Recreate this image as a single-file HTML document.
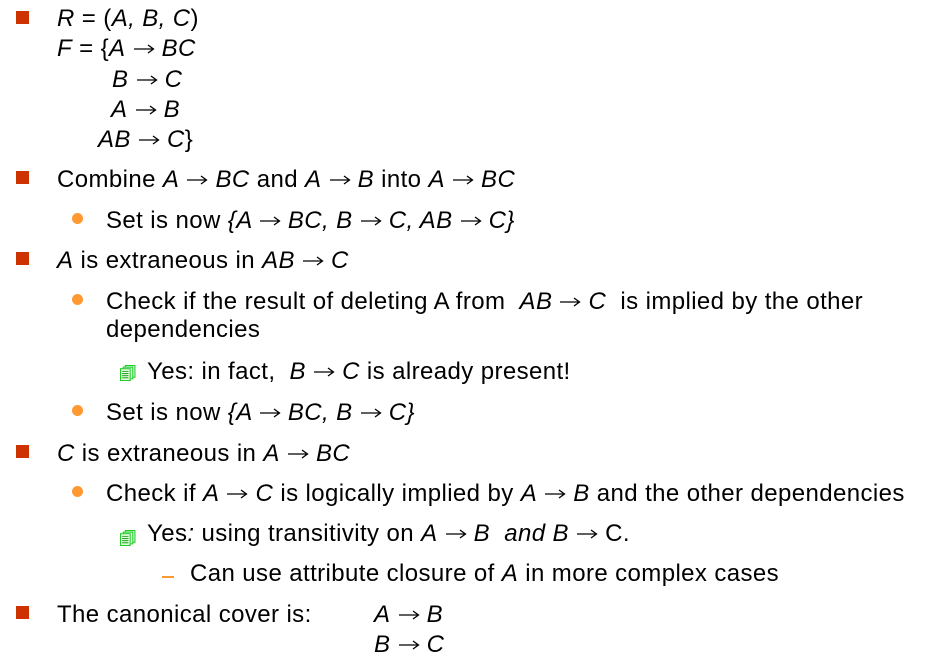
<!DOCTYPE html>
<html><head><meta charset="utf-8"><style>
body{margin:0;background:#fff;width:926px;height:669px;position:relative;overflow:hidden;font-family:"Liberation Sans",Arial,sans-serif;font-size:24px;letter-spacing:0.4px;color:#000}
.l{position:absolute;line-height:26px;white-space:pre;margin-top:2px}
i{font-style:italic}
.a{display:inline-block;width:22px;height:12px;vertical-align:1px}
.sq{position:absolute;left:16px;width:13px;height:13px;background:#cc3300}
.ci{position:absolute;left:72px;width:11px;height:11px;border-radius:50%;background:#ff9933}
.ic{position:absolute;left:120px;width:16px;height:16px}
.da{position:absolute;left:162px;width:12px;height:2px;background:#ff9933}
</style></head><body>
<svg width="0" height="0" style="position:absolute"><defs><symbol id="ar" viewBox="0 0 22 12"><path d="M1 6H20M15 2L20.5 6L15 10" fill="none" stroke="#000" stroke-width="1.3"/></symbol></defs></svg>
<div class="sq" style="top:11px"></div>
<div class="l" style="left:57px;top:4px"><i>R</i> = (<i>A, B, C</i>)</div>
<div class="l" style="left:57px;top:34px"><i>F</i> = {<i>A</i> <svg class="a"><use href="#ar"/></svg> <i>BC</i></div>
<div class="l" style="left:112px;top:65px"><i>B</i> <svg class="a"><use href="#ar"/></svg> <i>C</i></div>
<div class="l" style="left:111px;top:95px"><i>A</i> <svg class="a"><use href="#ar"/></svg> <i>B</i></div>
<div class="l" style="left:98px;top:125px"><i>AB</i> <svg class="a"><use href="#ar"/></svg> <i>C</i>}</div>

<div class="sq" style="top:171px"></div>
<div class="l" style="left:57px;top:165px">Combine <i>A</i> <svg class="a"><use href="#ar"/></svg> <i>BC</i> and <i>A</i> <svg class="a"><use href="#ar"/></svg> <i>B</i> into <i>A</i> <svg class="a"><use href="#ar"/></svg> <i>BC</i></div>
<div class="ci" style="top:213px"></div>
<div class="l" style="left:106px;top:206px">Set is now <i>{A <svg class="a"><use href="#ar"/></svg> BC, B <svg class="a"><use href="#ar"/></svg> C, AB <svg class="a"><use href="#ar"/></svg> C}</i></div>

<div class="sq" style="top:252px"></div>
<div class="l" style="left:57px;top:246px"><i>A</i> is extraneous in <i>AB</i> <svg class="a"><use href="#ar"/></svg> <i>C</i></div>
<div class="ci" style="top:294px"></div>
<div class="l" style="left:106px;top:287px">Check if the result of deleting A from  <i>AB</i> <svg class="a"><use href="#ar"/></svg> <i>C</i>  is implied by the other</div>
<div class="l" style="left:106px;top:315px">dependencies</div>
<svg class="ic" style="top:365px" viewBox="0 0 15 15"><rect x="5" y="0.5" width="9" height="11" fill="#dfe" stroke="#2c2"/><rect x="3" y="2" width="9" height="11" fill="#dfe" stroke="#2c2"/><rect x="0.5" y="3.5" width="9" height="11" fill="#efe" stroke="#2c2"/><path d="M2 6h6M2 8h6M2 10h6M2 12h6" stroke="#2a2"/></svg>
<div class="l" style="left:147px;top:357px">Yes: in fact,  <i>B</i> <svg class="a"><use href="#ar"/></svg> <i>C</i> is already present!</div>
<div class="ci" style="top:405px"></div>
<div class="l" style="left:106px;top:398px">Set is now <i>{A <svg class="a"><use href="#ar"/></svg> BC, B <svg class="a"><use href="#ar"/></svg> C}</i></div>

<div class="sq" style="top:445px"></div>
<div class="l" style="left:57px;top:439px"><i>C</i> is extraneous in <i>A</i> <svg class="a"><use href="#ar"/></svg> <i>BC</i></div>
<div class="ci" style="top:486px"></div>
<div class="l" style="left:106px;top:479px">Check if <i>A</i> <svg class="a"><use href="#ar"/></svg> <i>C</i> is logically implied by <i>A</i> <svg class="a"><use href="#ar"/></svg> <i>B</i> and the other dependencies</div>
<svg class="ic" style="top:530px" viewBox="0 0 15 15"><rect x="5" y="0.5" width="9" height="11" fill="#dfe" stroke="#2c2"/><rect x="3" y="2" width="9" height="11" fill="#dfe" stroke="#2c2"/><rect x="0.5" y="3.5" width="9" height="11" fill="#efe" stroke="#2c2"/><path d="M2 6h6M2 8h6M2 10h6M2 12h6" stroke="#2a2"/></svg>
<div class="l" style="left:147px;top:519px">Yes<i>:</i> using transitivity on <i>A</i> <svg class="a"><use href="#ar"/></svg> <i>B</i>  <i>and B</i> <svg class="a"><use href="#ar"/></svg> C.</div>
<div class="da" style="top:576px"></div>
<div class="l" style="left:190px;top:559px">Can use attribute closure of <i>A</i> in more complex cases</div>

<div class="sq" style="top:606px"></div>
<div class="l" style="left:57px;top:600px">The canonical cover is:</div>
<div class="l" style="left:374px;top:600px"><i>A</i> <svg class="a"><use href="#ar"/></svg> <i>B</i></div>
<div class="l" style="left:374px;top:630px"><i>B</i> <svg class="a"><use href="#ar"/></svg> <i>C</i></div>
</body></html>
